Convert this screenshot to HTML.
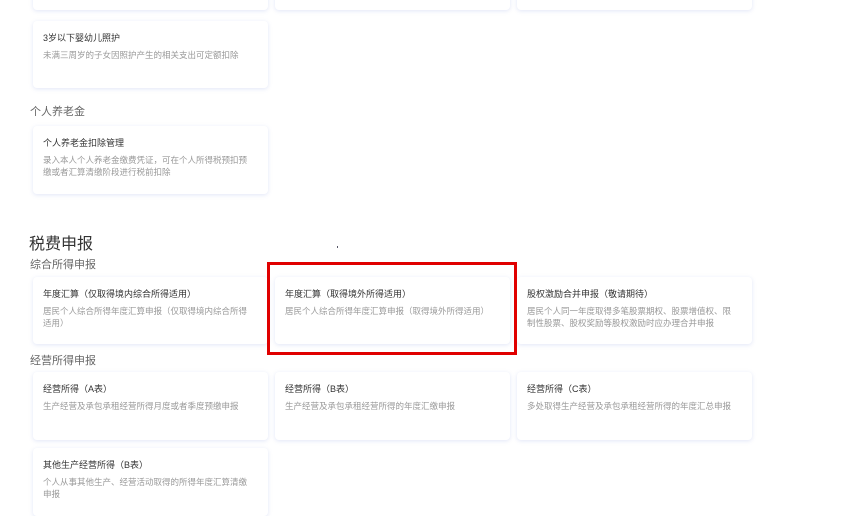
<!DOCTYPE html>
<html><head><meta charset="utf-8"><style>
body{margin:0;width:847px;height:502px;overflow:hidden;background:#fff;font-family:"Liberation Sans","Noto Sans CJK SC",sans-serif;position:relative}
.c{position:absolute;width:235px;background:#fff;border-radius:4px;box-shadow:0 1px 4px rgba(120,140,220,.22);box-sizing:border-box;padding:11px 20px 11px 10px}
.t{font-size:9px;color:#333;line-height:12px}
.d{font-size:8.5px;color:#999;line-height:12px;margin-top:5px}
.h{position:absolute;left:30px;font-size:11px;color:#666}
</style></head><body>
<div class="c" style="left:33px;top:-57px;height:67px"></div>
<div class="c" style="left:275px;top:-57px;height:67px"></div>
<div class="c" style="left:517px;top:-57px;height:67px"></div>
<div class="c" style="left:33px;top:21px;height:67px"><div class="t">3岁以下婴幼儿照护</div><div class="d">未满三周岁的子女因照护产生的相关支出可定额扣除</div></div>
<div class="h" style="top:103px">个人养老金</div>
<div class="c" style="left:33px;top:126px;height:68px"><div class="t">个人养老金扣除管理</div><div class="d">录入本人个人养老金缴费凭证，可在个人所得税预扣预缴或者汇算清缴阶段进行税前扣除</div></div>
<div style="position:absolute;left:29px;top:230px;font-size:16px;color:#333">税费申报</div>
<div style="position:absolute;left:337px;top:246px;width:1px;height:2px;background:#556"></div>
<div class="h" style="top:256px">综合所得申报</div>
<div class="c" style="left:33px;top:277px;height:67px"><div class="t">年度汇算（仅取得境内综合所得适用）</div><div class="d">居民个人综合所得年度汇算申报（仅取得境内综合所得适用）</div></div>
<div class="c" style="left:275px;top:277px;height:67px"><div class="t">年度汇算（取得境外所得适用）</div><div class="d">居民个人综合所得年度汇算申报（取得境外所得适用）</div></div>
<div class="c" style="left:517px;top:277px;height:67px"><div class="t">股权激励合并申报（敬请期待）</div><div class="d">居民个人同一年度取得多笔股票期权、股票增值权、限制性股票、股权奖励等股权激励时应办理合并申报</div></div>
<div style="position:absolute;left:267px;top:262px;width:250px;height:93px;border:3px solid #e00000;box-sizing:border-box"></div>
<div class="h" style="top:352px">经营所得申报</div>
<div class="c" style="left:33px;top:372px;height:68px"><div class="t">经营所得（A表）</div><div class="d">生产经营及承包承租经营所得月度或者季度预缴申报</div></div>
<div class="c" style="left:275px;top:372px;height:68px"><div class="t">经营所得（B表）</div><div class="d">生产经营及承包承租经营所得的年度汇缴申报</div></div>
<div class="c" style="left:517px;top:372px;height:68px"><div class="t">经营所得（C表）</div><div class="d">多处取得生产经营及承包承租经营所得的年度汇总申报</div></div>
<div class="c" style="left:33px;top:448px;height:68px"><div class="t">其他生产经营所得（B表）</div><div class="d">个人从事其他生产、经营活动取得的所得年度汇算清缴申报</div></div>
</body></html>
